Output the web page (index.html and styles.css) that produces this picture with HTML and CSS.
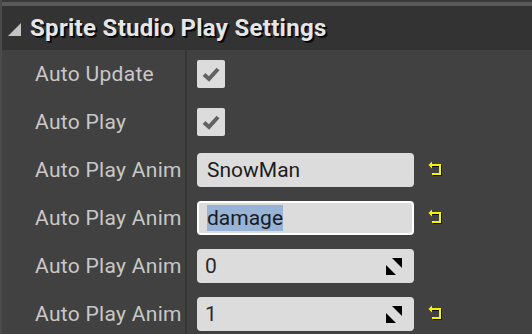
FILE: index.html
```html
<!DOCTYPE html>
<html lang="en">
<head>
    <meta charset="UTF-8">
    <title>Sprite Studio Play Settings</title>
    <link rel="stylesheet" href="styles.css">
</head>
<body>

<div class="panel">
    <div class="top-strip"></div>

    <!-- Category header -->
    <div class="category">
        <span class="arrow"></span>
        <span class="category-title">Sprite Studio Play Settings</span>
    </div>

    <div class="rows">
        <div class="row">
            <div class="label"><span>Auto Update</span></div>
            <div class="value">
                <span class="checkbox">
                    <svg width="20" height="20" viewBox="0 0 20 20"><path d="M3 10.5 L8 15 L17 5" fill="none" stroke="#626262" stroke-width="4"/></svg>
                </span>
            </div>
        </div>

        <div class="row">
            <div class="label"><span>Auto Play</span></div>
            <div class="value">
                <span class="checkbox">
                    <svg width="20" height="20" viewBox="0 0 20 20"><path d="M3 10.5 L8 15 L17 5" fill="none" stroke="#626262" stroke-width="4"/></svg>
                </span>
            </div>
        </div>

        <div class="row">
            <div class="label"><span>Auto Play Anim</span></div>
            <div class="value">
                <div class="field">SnowMan</div>
                <span class="reset">
                    <svg width="16" height="16" viewBox="0 0 16 16">
                        <path d="M4 5 H13 V14 H5" fill="none" stroke="#111" stroke-width="2"/>
                        <path d="M3 4 H12 V13 H4" fill="none" stroke="#f4f400" stroke-width="2"/>
                        <path d="M0.5 4 L4 0.5 L4 7.5 Z" fill="#f4f400"/>
                    </svg>
                </span>
            </div>
        </div>

        <div class="row">
            <div class="label"><span>Auto Play Anim</span></div>
            <div class="value">
                <div class="field focused"><span class="selected">damage</span></div>
                <span class="reset">
                    <svg width="16" height="16" viewBox="0 0 16 16">
                        <path d="M4 5 H13 V14 H5" fill="none" stroke="#111" stroke-width="2"/>
                        <path d="M3 4 H12 V13 H4" fill="none" stroke="#f4f400" stroke-width="2"/>
                        <path d="M0.5 4 L4 0.5 L4 7.5 Z" fill="#f4f400"/>
                    </svg>
                </span>
            </div>
        </div>

        <div class="row">
            <div class="label"><span>Auto Play Anim</span></div>
            <div class="value">
                <div class="field number">
                    <span>0</span>
                    <svg class="spin" width="17" height="17" viewBox="0 0 17 17">
                        <path d="M16 0 V10 L6 0 Z" fill="#000"/>
                        <path d="M0 17 V7 L10 17 Z" fill="#000"/>
                    </svg>
                </div>
            </div>
        </div>

        <div class="row">
            <div class="label"><span>Auto Play Anim</span></div>
            <div class="value">
                <div class="field number">
                    <span>1</span>
                    <svg class="spin" width="17" height="17" viewBox="0 0 17 17">
                        <path d="M16 0 V10 L6 0 Z" fill="#000"/>
                        <path d="M0 17 V7 L10 17 Z" fill="#000"/>
                    </svg>
                </div>
                <span class="reset">
                    <svg width="16" height="16" viewBox="0 0 16 16">
                        <path d="M4 5 H13 V14 H5" fill="none" stroke="#111" stroke-width="2"/>
                        <path d="M3 4 H12 V13 H4" fill="none" stroke="#f4f400" stroke-width="2"/>
                        <path d="M0.5 4 L4 0.5 L4 7.5 Z" fill="#f4f400"/>
                    </svg>
                </span>
            </div>
        </div>
    </div>
</div>

</body>
</html>
```

FILE: styles.css
```css
body {
    margin: 0;
    padding: 0;
    background-color: #414141;
    font-family: Roboto, "Noto Sans", sans-serif;
    overflow: hidden;
}

.panel {
    width: 532px;
    height: 334px;
    border-left: 2px solid #4b4b4b;
    box-sizing: border-box;
    background-color: #414141;
}

.top-strip {
    height: 2px;
    background-color: #3a3a3a;
    border-bottom: 4px solid #5a5a5a;
}

.category {
    height: 44px;
    background-color: #333;
    display: flex;
    align-items: center;
    padding-left: 6px;
}

.arrow {
    width: 0;
    height: 0;
    border-left: 13px solid transparent;
    border-bottom: 13px solid #c4c4c4;
    margin-right: 9px;
    margin-top: 2px;
}

.category-title {
    color: #e6e6e6;
    font-size: 24px;
    font-weight: 700;
    text-shadow: 1px 1px 0 #000, 2px 2px 0 #111;
    letter-spacing: 0.3px;
}

.row {
    height: 48px;
    display: flex;
}

.label {
    width: 150px;
    flex-shrink: 0;
    padding-left: 33px;
    color: #c8c8c8;
    font-size: 21px;
    letter-spacing: 0.3px;
    line-height: 48px;
    white-space: nowrap;
    overflow: hidden;
    border-right: 2px solid #363636;
}

.value {
    display: flex;
    align-items: center;
    padding-left: 10px;
    gap: 14px;
}

.checkbox {
    width: 28px;
    height: 28px;
    background-color: #dcdcdc;
    border-radius: 2px;
    display: flex;
    align-items: center;
    justify-content: center;
}

.field {
    width: 217px;
    height: 34px;
    box-sizing: border-box;
    background-color: #dcdcdc;
    border-radius: 4px;
    color: #1c1c1c;
    font-size: 21px;
    padding-left: 10px;
    display: flex;
    align-items: center;
}

.field.focused {
    border: 2px solid #fff;
    padding-left: 8px;
}

.selected {
    background-color: #97b4d6;
    line-height: 26px;
}

.field.number {
    justify-content: space-between;
    padding-left: 8px;
    padding-right: 11px;
    color: #2a2a2a;
}

.spin {
    display: block;
}

.reset {
    display: flex;
    margin-top: -2px;
}
```
